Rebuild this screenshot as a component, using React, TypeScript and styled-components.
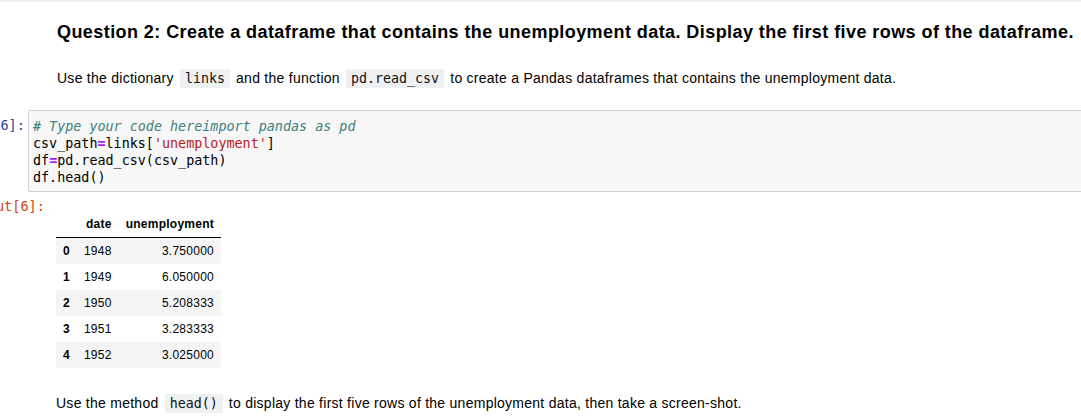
import React from "react";
import styled, { createGlobalStyle } from "styled-components";

const Global = createGlobalStyle`
  html, body { margin: 0; padding: 0; background: #ffffff; }
  body { overflow: hidden; font-family: "Liberation Sans", Arial, sans-serif; color: #000; }
`;

const Page = styled.div`
  width: 1081px;
  height: 417px;
  overflow: hidden;
  display: flex;
  flex-direction: column;
`;

const TopStrip = styled.div`
  height: 2px;
  background: #eeeeee;
  flex: none;
`;

const Markdown = styled.div`
  padding-left: 57px;
`;

const Heading = styled.h3`
  margin: 19px 0 0 0;
  font-size: 18px;
  line-height: 22px;
  font-weight: bold;
  letter-spacing: 0.43px;
  white-space: nowrap;
`;

const Para = styled.p`
  margin: 25px 0 0 0;
  font-size: 14px;
  line-height: 20px;
  letter-spacing: 0.26px;
  white-space: nowrap;
`;

const InlineCode = styled.code`
  font-family: "DejaVu Sans Mono", "Liberation Mono", monospace;
  font-size: 13.3px;
  letter-spacing: 0;
  background: #eff0f1;
  padding: 2px 5px;
  border-radius: 2px;
  margin: 0 2px;
  color: #111;
`;

const CellRow = styled.div<{ $top: number }>`
  display: flex;
  align-items: flex-start;
  margin-top: ${(p) => p.$top}px;
`;

const Prompt = styled.div<{ $kind: "in" | "out"; $width: number; $pt: number; $pr: number }>`
  flex: none;
  width: ${(p) => p.$width}px;
  display: flex;
  justify-content: flex-end;
  box-sizing: border-box;
  padding-right: ${(p) => p.$pr}px;
  padding-top: ${(p) => p.$pt}px;
  font-family: "DejaVu Sans Mono", "Liberation Mono", monospace;
  font-size: 13.6px;
  line-height: 17px;
  white-space: nowrap;
  color: ${(p) => (p.$kind === "in" ? "#303F9F" : "#D84315")};
`;

const InputBox = styled.div`
  flex: 1;
  margin-right: -6px;
  background: #f7f7f7;
  border: 1px solid #cfcfcf;
  border-radius: 2px;
  padding: 7px 4px 5px 4px;
  font-family: "DejaVu Sans Mono", "Liberation Mono", monospace;
  font-size: 13.4px;
  line-height: 17px;
  white-space: pre;
`;

const CodeLine = styled.div``;

const Comment = styled.span`
  color: #408080;
  font-style: italic;
`;
const Op = styled.span`
  color: #aa22ff;
  font-weight: bold;
`;
const Str = styled.span`
  color: #ba2121;
`;

const OutputArea = styled.div`
  padding-left: 6px;
  padding-top: 13px;
`;

const Table = styled.table`
  border-collapse: collapse;
  border-spacing: 0;
  font-size: 12px;
  letter-spacing: 0.25px;
  color: #000;
`;

const Th = styled.th`
  text-align: right;
  vertical-align: middle;
  padding: 6px 7px;
  line-height: 14px;
  font-weight: bold;
`;

const Td = styled.td`
  text-align: right;
  vertical-align: middle;
  padding: 6px 7px;
  line-height: 14px;
`;

const HeadRow = styled.tr`
  border-bottom: 1px solid #000;
`;

const BodyRow = styled.tr<{ $odd: boolean }>`
  background: ${(p) => (p.$odd ? "#f5f5f5" : "#ffffff")};
`;

const BottomPara = styled.p`
  margin: 25px 0 0 56px;
  font-size: 14px;
  line-height: 20px;
  letter-spacing: 0.26px;
  white-space: nowrap;
`;

const rows = [
  ["0", "1948", "3.750000"],
  ["1", "1949", "6.050000"],
  ["2", "1950", "5.208333"],
  ["3", "1951", "3.283333"],
  ["4", "1952", "3.025000"],
];

export default function App() {
  return (
    <Page>
      <Global />
      <TopStrip />
      <Markdown>
        <Heading>
          Question 2: Create a dataframe that contains the unemployment data. Display the first five rows of the
          dataframe.
        </Heading>
        <Para>
          Use the dictionary <InlineCode>links</InlineCode> and the function <InlineCode>pd.read_csv</InlineCode> to
          create a Pandas dataframes that contains the unemployment data.
        </Para>
      </Markdown>
      <CellRow $top={21}>
        <Prompt $kind="in" $width={28} $pt={7} $pr={3}>
          In&nbsp;[6]:
        </Prompt>
        <InputBox>
          <CodeLine>
            <Comment># Type your code hereimport pandas as pd</Comment>
          </CodeLine>
          <CodeLine>
            csv_path<Op>=</Op>links[<Str>'unemployment'</Str>]
          </CodeLine>
          <CodeLine>
            df<Op>=</Op>pd.read_csv(csv_path)
          </CodeLine>
          <CodeLine>df.head()</CodeLine>
        </InputBox>
      </CellRow>
      <CellRow $top={6}>
        <Prompt $kind="out" $width={50} $pt={0} $pr={5}>
          Out[6]:
        </Prompt>
        <OutputArea>
          <Table>
            <thead>
              <HeadRow>
                <Th></Th>
                <Th>date</Th>
                <Th>unemployment</Th>
              </HeadRow>
            </thead>
            <tbody>
              {rows.map((r, i) => (
                <BodyRow key={r[0]} $odd={i % 2 === 0}>
                  <Th>{r[0]}</Th>
                  <Td>{r[1]}</Td>
                  <Td>{r[2]}</Td>
                </BodyRow>
              ))}
            </tbody>
          </Table>
        </OutputArea>
      </CellRow>
      <BottomPara>
        Use the method <InlineCode>head()</InlineCode> to display the first five rows of the unemployment data, then
        take a screen-shot.
      </BottomPara>
    </Page>
  );
}
